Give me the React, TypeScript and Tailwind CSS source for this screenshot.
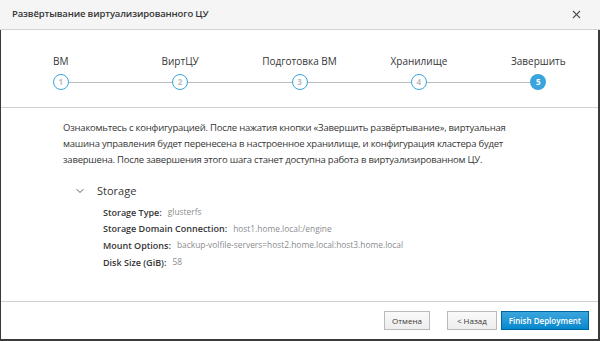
import { ChevronDown, X } from "lucide-react";

const steps = ["ВМ", "ВиртЦУ", "Подготовка ВМ", "Хранилище", "Завершить"];

const fields = [
  { label: "Storage Type:", value: "glusterfs" },
  { label: "Storage Domain Connection:", value: "host1.home.local:/engine" },
  { label: "Mount Options:", value: "backup-volfile-servers=host2.home.local:host3.home.local" },
  { label: "Disk Size (GiB):", value: "58" },
];

export default function App() {
  return (
    <div className="w-[600px] h-[341px] flex flex-col bg-white text-[#363636] font-['Open_Sans',sans-serif] overflow-hidden">
      {/* header */}
      <div className="h-[30px] shrink-0 flex items-center justify-between pl-[12px] pr-[17px] bg-[#f5f5f5] border-b border-[#d1d1d1]">
        <h1 className="text-[9.5px] font-semibold tracking-[-0.15px]">Развёртывание виртуализированного ЦУ</h1>
        <X className="w-[13px] h-[13px] text-[#4d5258]" strokeWidth={2} />
      </div>

      <div className="flex-1 flex flex-col border-l border-r-2 border-b-2 border-[#3a3a3a]">
        {/* wizard steps */}
        <div className="h-[78px] shrink-0 border-b border-[#d1d1d1] grid grid-cols-5 pt-[24px]">
          {steps.map((s, i) => {
            const active = i === steps.length - 1;
            return (
              <div key={s} className="flex flex-col items-center">
                <span className="text-[10px] leading-[14px] h-[14px]">{s}</span>
                <div className="w-full flex items-center mt-[6px]">
                  <div className={`flex-1 h-px ${i === 0 ? "" : "bg-[#bbbbbb]"}`} />
                  <div
                    className={`w-[16px] h-[16px] rounded-full flex items-center justify-center text-[8px] font-bold ${
                      active
                        ? "bg-[#39a5dc] text-white"
                        : "bg-white border-[1.5px] border-[#39a5dc] text-[#bbbbbb]"
                    }`}
                  >
                    {i + 1}
                  </div>
                  <div className={`flex-1 h-px ${active ? "" : "bg-[#bbbbbb]"}`} />
                </div>
              </div>
            );
          })}
        </div>

        {/* body */}
        <div className="flex-1 pl-[62px] pr-[20px] pt-[12px]">
          <p className="text-[9.5px] leading-[16px] tracking-[-0.22px] whitespace-nowrap">
            Ознакомьтесь с конфигурацией. После нажатия кнопки «Завершить развёртывание», виртуальная
            <br />
            машина управления будет перенесена в настроенное хранилище, и конфигурация кластера будет
            <br />
            завершена. После завершения этого шага станет доступна работа в виртуализированном ЦУ.
          </p>
          <div className="flex items-center mt-[12px] ml-[11px] h-[22px]">
            <ChevronDown className="w-[12px] h-[12px] text-[#363636]" strokeWidth={1.6} />
            <span className="ml-[11px] text-[11px]">Storage</span>
          </div>
          <div className="ml-[40px] mt-[2px] flex flex-col">
            {fields.map((f) => (
              <div key={f.label} className="h-[16.7px] flex items-center text-[9px]">
                <span className="font-semibold">{f.label}</span>
                <span className="ml-[6px] text-[8.4px] text-[#8b8d8f]">{f.value}</span>
              </div>
            ))}
          </div>
        </div>

        {/* footer */}
        <div className="h-[38px] shrink-0 border-t border-[#d1d1d1] flex items-center justify-end pr-[9px]">
          <button className="h-[19px] px-[7px] text-[8px] border border-[#bbbbbb] bg-gradient-to-b from-[#fafafa] to-[#ededed] text-[#363636]">
            Отмена
          </button>
          <button className="ml-[17px] h-[19px] px-[9px] text-[8px] border border-[#bbbbbb] bg-gradient-to-b from-[#fafafa] to-[#ededed] text-[#363636]">
            &lt; Назад
          </button>
          <button className="ml-[4px] h-[19px] px-[7px] text-[8px] font-semibold text-white border border-[#00659c] bg-gradient-to-b from-[#39a5dc] to-[#0088ce]">
            Finish Deployment
          </button>
        </div>
      </div>
    </div>
  );
}
